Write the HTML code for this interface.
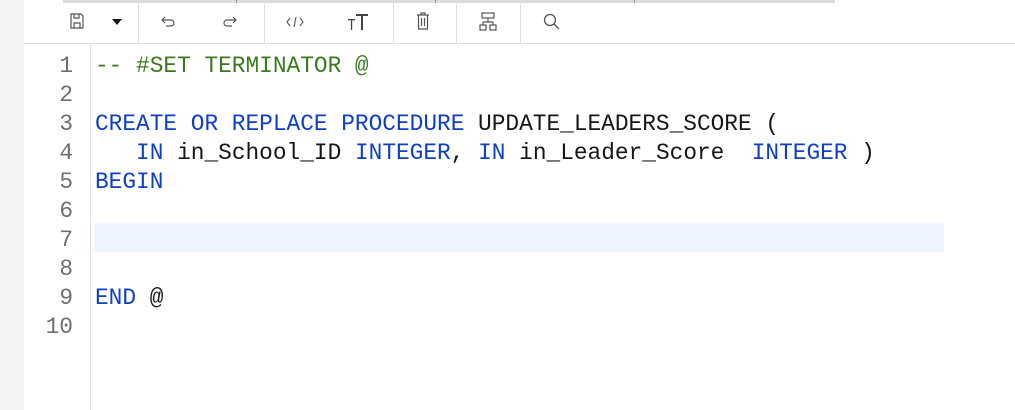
<!DOCTYPE html>
<html><head><meta charset="utf-8"><style>
body{margin:0;width:1015px;height:410px;background:#fff;position:relative;overflow:hidden;font-family:"Liberation Mono",monospace;}
.left{position:absolute;left:0;top:0;width:24px;height:410px;background:#f4f4f4;}
.topbar{position:absolute;left:63px;top:0;width:772px;height:3px;background:#dcdcdc;}
.tick{position:absolute;top:0;width:1px;height:3px;background:#999;}
.tb{position:absolute;left:24px;top:3px;width:991px;height:40px;border-bottom:1px solid #e0e0e0;}
.sep{position:absolute;top:3px;width:1px;height:40px;background:#e0e0e0;}
.ic{position:absolute;top:12px;}
.gut{position:absolute;left:90px;top:44px;width:1px;height:366px;background:#e6e6e6;}
.hl{position:absolute;left:94px;top:223px;width:850px;height:29px;background:#edf5ff;}
.ln{position:absolute;left:24px;width:49px;text-align:right;color:#6f6f6f;font-size:22.8px;line-height:29px;}
.code{position:absolute;left:95px;white-space:pre;font-size:22.8px;line-height:29px;color:#161616;}
.k{color:#0f3fc4}.c{color:#3b7a1f}
</style></head><body>
<div class="left"></div>
<div class="topbar"></div>
<div class="tick" style="left:236px"></div><div class="tick" style="left:435px"></div><div class="tick" style="left:634px"></div>
<div class="tb"></div>
<div class="sep" style="left:138px"></div><div class="sep" style="left:264px"></div><div class="sep" style="left:393px"></div><div class="sep" style="left:456px"></div><div class="sep" style="left:520px"></div>
<svg class="ic" style="left:69px" width="16" height="18" viewBox="0 0 16 18" fill="none" stroke="#555" stroke-width="1.2"><path d="M2 2h10l2 2v12H2z"/><path d="M5 2v4h5V2"/><path d="M5 16v-5h6v5"/></svg>
<svg class="ic" style="left:112px;top:18px" width="10" height="8"><path d="M0 1h10L5 7z" fill="#161616"/></svg>
<svg class="ic" style="left:160px;top:15px" width="16" height="14" fill="none" stroke="#555" stroke-width="1.2"><path d="M5 2L2 5l3 3"/><path d="M2 5h9a3 3 0 0 1 0 6H6"/></svg>
<svg class="ic" style="left:222px;top:15px" width="16" height="14" fill="none" stroke="#555" stroke-width="1.2"><path d="M11 2l3 3-3 3"/><path d="M14 5H5a3 3 0 0 0 0 6h5"/></svg>
<svg class="ic" style="left:286px;top:16px" width="18" height="12" fill="none" stroke="#555" stroke-width="1.1"><path d="M4 2L1 6l3 4M14 2l3 4-3 4M10 1L8 11"/></svg>
<svg class="ic" style="left:347px;top:12px" width="22" height="20" fill="#444"><rect x="1" y="7" width="7" height="1.3"/><rect x="3.9" y="7" width="1.3" height="11"/><rect x="9" y="2" width="12" height="2"/><rect x="14" y="2" width="2" height="16"/></svg>
<svg class="ic" style="left:416px;top:11px" width="14" height="20" fill="none" stroke="#555" stroke-width="1.2"><path d="M1 4h12M5 4V2h4v2M2.5 4v14h9V4M5.5 7v8M8.5 7v8"/></svg>
<svg class="ic" style="left:479px;top:12px" width="18" height="20" fill="none" stroke="#555" stroke-width="1.2"><rect x="3" y="1" width="12" height="5"/><path d="M9 6v4M4 10h10M4 10v3M14 10v3"/><rect x="1" y="13" width="6" height="5"/><rect x="11" y="13" width="6" height="5"/></svg>
<svg class="ic" style="left:543px;top:13px" width="18" height="18" fill="none" stroke="#555" stroke-width="1.3"><circle cx="7" cy="7" r="5.5"/><path d="M11 11l5 5"/></svg>
<div class="gut"></div>
<div class="hl"></div>
<div class="ln" style="top:52px">1<br>2<br>3<br>4<br>5<br>6<br>7<br>8<br>9<br>10</div>
<div class="code" style="top:52px"><span class="c">-- #SET TERMINATOR @</span>

<span class="k">CREATE OR REPLACE PROCEDURE</span> UPDATE_LEADERS_SCORE (
   <span class="k">IN</span> in_School_ID <span class="k">INTEGER</span>, <span class="k">IN</span> in_Leader_Score  <span class="k">INTEGER</span> )
<span class="k">BEGIN</span>



<span class="k">END</span> @
</div>
</body></html>
